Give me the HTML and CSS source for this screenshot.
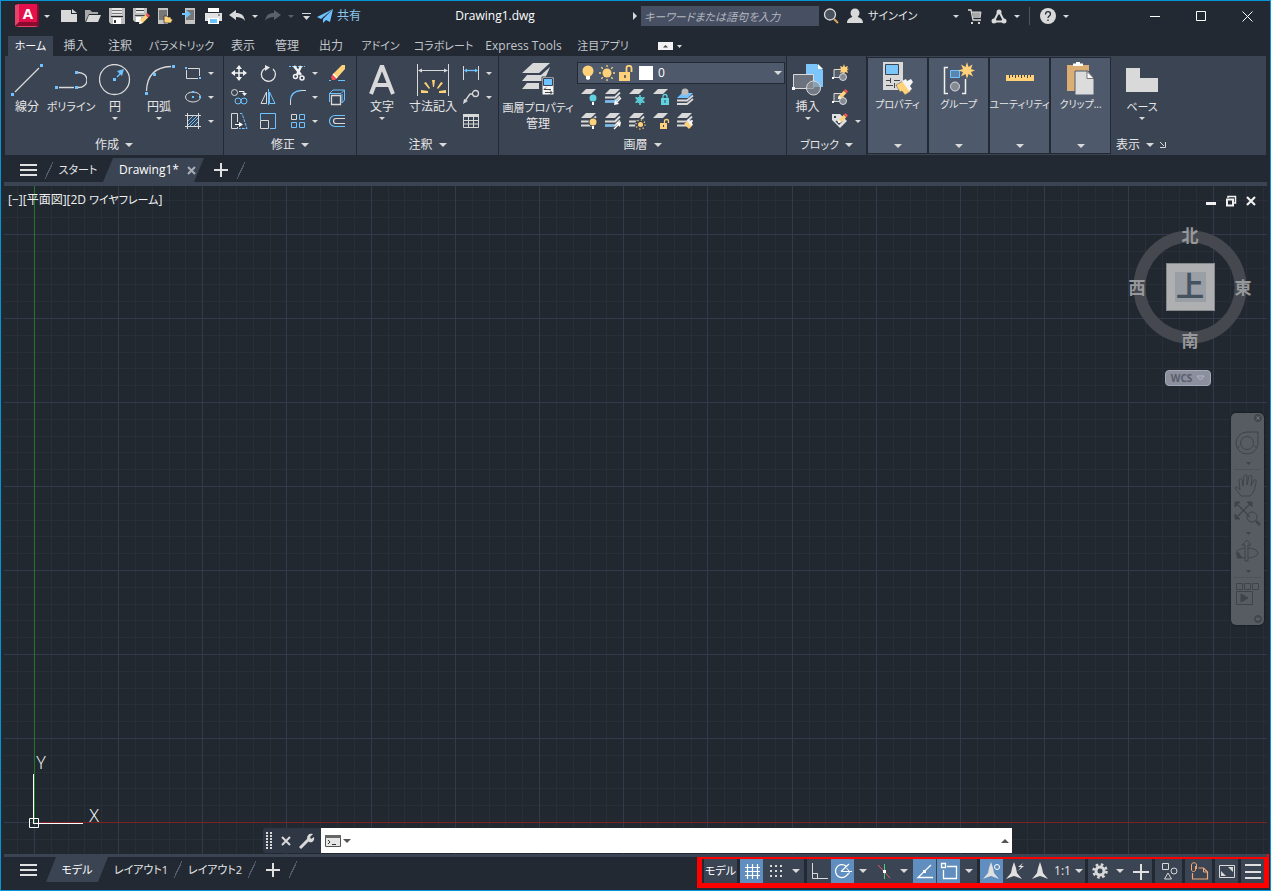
FILE: index.html
```html
<!DOCTYPE html>
<html lang="ja">
<head>
    <meta charset="UTF-8">
    <meta name="viewport" content="width=device-width, initial-scale=1.0">
    <title>Drawing1.dwg</title>
    <link rel="stylesheet" href="styles.css">
</head>
<body>
    <!-- Shared symbols -->
    <svg class="sprite" aria-hidden="true">
        <symbol id="plane" viewBox="0 0 18 18"><path d="M6 1h10l-5 5H1z" fill="#d9d9d9"/></symbol>
        <symbol id="stack" viewBox="0 0 18 18">
            <path d="M6 1h10l-5 5H1z" fill="#d9d9d9"/>
            <path d="M1 9.500h10l5-5M1 13.500h10l5-5" fill="none" stroke="#d9d9d9" stroke-width="2"/>
        </symbol>
        <symbol id="pencil" viewBox="0 0 12 12">
            <path d="M0 12l1-4 6-6 3 3-6 6z" fill="#ffd27a"/><path d="M7 2l2-2 3 3-2 2z" fill="#f2554f"/><path d="M0 12l1-4 3 3z" fill="#fff"/>
        </symbol>
        <symbol id="compass-a" viewBox="0 0 22 22"><path d="M11 2l2 6 1 5 5 6-5-2-3-1-3 1-5 2 5-6 1-5z" fill="#e0e0e0"/></symbol>
    </svg>

    <div class="app">
        <!-- Title bar -->
        <header class="titlebar">
            <div class="quick-access">
                <button class="logo-btn" aria-label="アプリケーション">
                    <svg width="25" height="24" viewBox="0 0 25 24"><path d="M0 1l4-1v18l20 5H4l-4-1z" fill="#e8446a"/><path d="M4 0h18v18H4z" fill="#e4104b"/><path d="M22 0l2 2v19l-2-3zM0 22l4-4h18l2 4z" fill="#8b0a2d"/><text x="13" y="15" class="logo-letter">A</text></svg>
                    <span class="caret"></span>
                </button>
                <button class="icon-btn" aria-label="新規"><svg width="16" height="14" viewBox="0 0 16 14"><path d="M0 1h10v4h6v8H0z" fill="#d9d9d9"/><path d="M11 0l5 4h-5z" fill="#d9d9d9"/></svg></button>
                <button class="icon-btn" aria-label="開く"><svg width="16" height="14" viewBox="0 0 16 14"><path d="M0 13V1h5l2 2h6v2H4z" fill="#a9a9a9"/><path d="M4 6h12l-3 7H1z" fill="#d9d9d9"/></svg></button>
                <button class="icon-btn" aria-label="上書き保存"><svg width="16" height="16" viewBox="0 0 16 16"><path d="M0 0h16v16H2l-2-2z" fill="#bdbdbd"/><path d="M3 0h10v7H3z" fill="#e6e6e6"/><path d="M3 2.500h10M3 5.500h10" stroke="#777"/><path d="M4 10h8v6H4z" fill="#fff"/><path d="M5 12h2v3H5z" fill="#333"/><path d="M2 8.500h12" stroke="#222"/></svg></button>
                <button class="icon-btn" aria-label="名前を付けて保存"><svg width="17" height="16" viewBox="0 0 17 16"><path d="M0 0h14v7l-6 7H2l-2-2z" fill="#bdbdbd"/><path d="M3 0h8v5H3z" fill="#e6e6e6"/><path d="M3 2.500h8M2 7.500h10" stroke="#444"/><path d="M3 9h5v5H3z" fill="#fff"/><use href="#pencil" x="6" y="5" width="11" height="11"/></svg></button>
                <button class="icon-btn" aria-label="Web から開く"><svg width="16" height="16" viewBox="0 0 16 16"><path d="M1 0h10v16H1z" fill="#c4c4c4"/><path d="M2 2h8v10H2z" fill="#777"/><path d="M7 15V8h3l1 1h3v2h2l-2 4z" fill="#ffd27a" stroke="#222933" stroke-width=".7"/></svg></button>
                <button class="icon-btn" aria-label="Web に保存"><svg width="16" height="16" viewBox="0 0 16 16"><path d="M4 0h10v16H4z" fill="#c4c4c4"/><path d="M5 2h8v10H5z" fill="#777"/><path d="M1 5h4V2l5 4-5 4V7H1z" fill="#6ec2ff"/></svg></button>
                <button class="icon-btn" aria-label="印刷"><svg width="17" height="16" viewBox="0 0 17 16"><path d="M3 0h11v4H3z" fill="#fff"/><path d="M0 5h17v8h-3v-3H3v3H0z" fill="#e2e2e2"/><path d="M3 10h11v6H3z" fill="#fff"/><path d="M5 11h7v4H5z" fill="#6ec2ff"/><path d="M13 7h2" stroke="#444"/></svg></button>
                <button class="icon-btn" aria-label="元に戻す"><svg width="16" height="12" viewBox="0 0 16 12"><path d="M7 0v3c5 0 8 2 9 8-2-3-5-4-9-4v3L0 5z" fill="#d9d9d9"/></svg></button>
                <button class="drop" aria-label="元に戻す一覧"><span class="caret"></span></button>
                <button class="icon-btn" aria-label="やり直し"><svg width="16" height="12" viewBox="0 0 16 12"><path d="M9 0v3C4 3 1 5 0 11c2-3 5-4 9-4v3l7-5z" fill="#5b616a"/></svg></button>
                <button class="drop" aria-label="やり直し一覧"><span class="caret dim"></span></button>
                <button class="drop custom" aria-label="カスタマイズ"><svg width="9" height="7" viewBox="0 0 9 7"><path d="M0 0h9v1H0zM1 3h7L4.500 7z" fill="#d9d9d9"/></svg></button>
                <button class="share-btn"><svg width="16" height="14" viewBox="0 0 16 14"><path d="M16 0L0 8l4 2z M16 0L6 10v4l3-3 4 2z" fill="#6ec2ff"/></svg>共有</button>
            </div>
            <h1>Drawing1.dwg</h1>
            <div class="title-tools">
                <button class="drop" aria-label="検索を折りたたむ"><svg width="5" height="8" viewBox="0 0 5 8"><path d="M0 0l4 4-4 4z" fill="#d9d9d9"/></svg></button>
                <input class="search" type="search" aria-label="キーワード検索" placeholder="キーワードまたは語句を入力">
                <button class="icon-btn" aria-label="検索"><svg width="16" height="16" viewBox="0 0 16 16"><circle cx="7" cy="6.500" r="5.500" fill="#49525c" stroke="#d9d9d9" stroke-width="1.300"/><path d="M11 11l4 4" stroke="#d5a662" stroke-width="2"/></svg></button>
                <button class="signin"><svg width="16" height="16" viewBox="0 0 16 16"><circle cx="8" cy="5" r="4.500" fill="#d9d9d9"/><path d="M0 15c0-4 3-5 5-6h6c2 1 5 2 5 6z" fill="#d9d9d9"/></svg><span class="kana">サインイン</span><span class="caret"></span></button>
                <button class="icon-btn" aria-label="ストア"><svg width="14" height="15" viewBox="0 0 14 15"><path d="M0 1h3l2 10h8" fill="none" stroke="#d9d9d9" stroke-width="1.300"/><path d="M4 3h9l-1 6H5z" fill="#a9a9a9"/><path d="M4 3h9l-1 6" fill="none" stroke="#d9d9d9"/><path d="M3 13h2v2H3zM10 13h2v2h-2z" fill="#d9d9d9"/></svg></button>
                <button class="icon-btn" aria-label="接続"><svg width="16" height="15" viewBox="0 0 16 15"><path d="M8 2L3 12M8 2l5 10M3 12.500h10" fill="none" stroke="#d9d9d9" stroke-width="2"/><circle cx="8" cy="3" r="2.500" fill="#d9d9d9"/><circle cx="3" cy="12" r="2.500" fill="#d9d9d9"/><circle cx="13" cy="12" r="2.500" fill="#d9d9d9"/></svg></button>
                <button class="drop" aria-label="接続一覧"><span class="caret"></span></button>
                <span class="divider"></span>
                <button class="icon-btn" aria-label="ヘルプ"><svg width="16" height="16" viewBox="0 0 16 16"><circle cx="8" cy="8" r="8" fill="#d9d9d9"/><path d="M5.500 6.500c0-4 5-3.500 5-.5 0 2-2.500 2-2.500 4M8 11.500v1.500" fill="none" stroke="#222933" stroke-width="1.300"/></svg></button>
                <button class="drop" aria-label="ヘルプ一覧"><span class="caret"></span></button>
            </div>
            <div class="window-buttons">
                <button aria-label="最小化"><svg width="11" height="11" viewBox="0 0 11 11"><path d="M0 5.500h10" stroke="#fff"/></svg></button>
                <button aria-label="最大化"><svg width="11" height="11" viewBox="0 0 11 11"><path d="M.5.5h9v9h-9z" fill="none" stroke="#fff"/></svg></button>
                <button aria-label="閉じる"><svg width="11" height="11" viewBox="0 0 11 11"><path d="M.5.5l10 10m0-10l-10 10" stroke="#fff"/></svg></button>
            </div>
        </header>

        <!-- Ribbon tabs -->
        <nav class="ribbon-tabs">
            <button class="active kana">ホーム</button>
            <button>挿入</button>
            <button>注釈</button>
            <button class="kana">パラメトリック</button>
            <button>表示</button>
            <button>管理</button>
            <button>出力</button>
            <button class="kana">アドイン</button>
            <button class="kana">コラボレート</button>
            <button>Express Tools</button>
            <button class="kana">注目アプリ</button>
            <button class="minimize" aria-label="リボンを最小化"><svg width="25" height="8" viewBox="0 0 25 8"><path d="M0 0h15v8H0z" fill="#f2f2f2"/><path d="M5 5.500h5L7.500 3z" fill="#444"/><path d="M19 3h5l-2.500 3z" fill="#d9d9d9"/></svg></button>
        </nav>

        <!-- Ribbon -->
        <div class="ribbon">
            <section class="panel draw">
                <div class="panel-body">
                    <button class="tool"><svg width="32" height="32" viewBox="0 0 32 32"><path d="M4 28L28 4" stroke="#d9d9d9" stroke-width="1.300"/><path d="M0 29h3v3H0zM29 0h3v3h-3z" fill="#6ec2ff"/></svg><span>線分</span></button>
                    <button class="tool"><svg width="32" height="32" viewBox="0 0 32 32"><path d="M4 23.500h15m4 0c12 0 12-15 0-15" fill="none" stroke="#d9d9d9" stroke-width="1.300"/><path d="M0 22h3v3H0zM20 22h3v3h-3zM20 7h3v3h-3z" fill="#6ec2ff"/></svg><span class="kana">ポリライン</span></button>
                    <button class="tool"><svg width="32" height="32" viewBox="0 0 32 32"><circle cx="15.500" cy="15.500" r="15" fill="none" stroke="#d9d9d9" stroke-width="1.300"/><path d="M18 13l4-4" stroke="#6ec2ff" stroke-width="1.300"/><path d="M14 14h3v3h-3zM18 7l7-2-2 7z" fill="#6ec2ff"/></svg><span>円</span><i class="caret"></i></button>
                    <button class="tool"><svg width="32" height="32" viewBox="0 0 32 32"><path d="M3.500 27C4 10 14 3 28 2.500" fill="none" stroke="#d9d9d9" stroke-width="1.300"/><path d="M2 28h3v3H2zM10 9h3v3h-3zM29 1h3v3h-3z" fill="#6ec2ff"/></svg><span>円弧</span><i class="caret"></i></button>
                    <div class="tool-grid">
                        <button aria-label="長方形"><svg width="18" height="18" viewBox="0 0 18 18"><path d="M4 4.500h11.500V12M14 14.500H2.500V6" fill="none" stroke="#d9d9d9"/><path d="M1 3h2v2H1zM15 13h2v2h-2z" fill="#6ec2ff"/></svg></button><button aria-label="長方形一覧"><i class="caret"></i></button>
                        <button aria-label="楕円"><svg width="18" height="18" viewBox="0 0 18 18"><ellipse cx="9" cy="9" rx="7.500" ry="5" fill="none" stroke="#d9d9d9"/><path d="M8 3h2v2H8zM8 8h2v2H8zM15 8h2v2h-2z" fill="#6ec2ff"/></svg></button><button aria-label="楕円一覧"><i class="caret"></i></button>
                        <button aria-label="ハッチング"><svg width="18" height="18" viewBox="0 0 18 18"><path d="M4 9l5-5M4 13l9-9M6 14l8-8M10 14l4-4" stroke="#6ec2ff"/><path d="M3.500 1v16M14.500 1v16M1 3.500h16M1 14.500h16" stroke="#d9d9d9"/></svg></button><button aria-label="ハッチング一覧"><i class="caret"></i></button>
                    </div>
                </div>
                <button class="panel-title">作成 <i class="caret big"></i></button>
            </section>

            <section class="panel modify">
                <div class="panel-body">
                    <div class="tool-grid">
                        <button aria-label="移動"><svg width="18" height="18" viewBox="0 0 18 18"><path d="M9 2v14M2 9h14" stroke="#f2f2f2" stroke-width="1.500"/><path d="M9 1l3 4H6zM9 17l3-4H6zM1 9l4-3v6zM17 9l-4-3v6z" fill="#f2f2f2"/></svg></button>
                        <button aria-label="回転"><svg width="18" height="18" viewBox="0 0 18 18"><path d="M14 5A7 7 0 1 1 6 4.200" fill="none" stroke="#e6e6e6" stroke-width="1.300"/><path d="M6 1l5 2.500L6 7z" fill="#e6e6e6"/></svg></button>
                        <button aria-label="トリム"><svg width="18" height="18" viewBox="0 0 18 18"><path d="M0 2.500h16" stroke="#6ec2ff" stroke-dasharray="2 1"/><path d="M5 2l7 9M12 2l-4 9" stroke="#f2f2f2" stroke-width="2.500"/><circle cx="6.500" cy="12.500" r="2" fill="none" stroke="#f2f2f2" stroke-width="1.500"/><circle cx="13" cy="14" r="2" fill="none" stroke="#f2f2f2" stroke-width="1.500"/></svg></button>
                        <button aria-label="トリム一覧"><i class="caret"></i></button>
                        <button aria-label="削除"><svg width="18" height="18" viewBox="0 0 18 18"><path d="M5 10L14 1h3v4l-8 9z" fill="#ffd27a"/><path d="M5 10l4 4-2 2H4l-1-3z" fill="#f2554f"/><path d="M5 10l4 4" stroke="#fff" stroke-width="1.500"/><path d="M10 16.500h7M1 16.500h2" stroke="#6ec2ff"/></svg></button>
                        <button aria-label="複写"><svg width="18" height="18" viewBox="0 0 18 18"><circle cx="4.500" cy="4.500" r="3" fill="none" stroke="#d9d9d9"/><path d="M9 3.500h5V6" fill="none" stroke="#f2f2f2"/><path d="M12 5h5l-2.500 3z" fill="#f2f2f2"/><circle cx="8" cy="13" r="3" fill="none" stroke="#6ec2ff"/><circle cx="14" cy="13" r="3" fill="none" stroke="#6ec2ff"/></svg></button>
                        <button aria-label="鏡像"><svg width="18" height="18" viewBox="0 0 18 18"><path d="M7.500 4v11.500H2z" fill="none" stroke="#d9d9d9"/><path d="M10.500 4v11.500H16z" fill="none" stroke="#6ec2ff"/><path d="M9.500 1v16" stroke="#6ec2ff"/></svg></button>
                        <button aria-label="フィレット"><svg width="18" height="18" viewBox="0 0 18 18"><path d="M1.500 17v-5M12 2.500h5" stroke="#d9d9d9"/><path d="M1.500 12C2 6 6 3 12 2.500" fill="none" stroke="#6ec2ff" stroke-width="1.300"/></svg></button>
                        <button aria-label="フィレット一覧"><i class="caret"></i></button>
                        <button aria-label="分解"><svg width="18" height="18" viewBox="0 0 18 18"><path d="M3.500 7.500h9v9h-9z" fill="none" stroke="#d9d9d9" stroke-width="1.300"/><path d="M1.500 14V5.500L5 2h11.500v10L14 15V6M1.500 5.500H13L16.500 2" fill="none" stroke="#6ec2ff"/></svg></button>
                        <button aria-label="ストレッチ"><svg width="18" height="18" viewBox="0 0 18 18"><path d="M7.500 10V1.500h-6v15h6V15" fill="none" stroke="#d9d9d9"/><path d="M10 1.500h2l5 15H9" fill="none" stroke="#6ec2ff" stroke-dasharray="3 1"/><path d="M5 12.500h5" stroke="#fff"/><path d="M9 10l4 2.500L9 15z" fill="#fff"/></svg></button>
                        <button aria-label="尺度変更"><svg width="18" height="18" viewBox="0 0 18 18"><path d="M1.500 8V1.500h15v15H11" fill="none" stroke="#6ec2ff"/><path d="M1.500 8.500h8v8h-8z" fill="none" stroke="#d9d9d9"/></svg></button>
                        <button aria-label="配列複写"><svg width="18" height="18" viewBox="0 0 18 18"><path d="M2.500 2.500h5v5h-5z" fill="none" stroke="#d9d9d9"/><path d="M10.500 2.500h5v5h-5zM2.500 10.500h5v5h-5zM10.500 10.500h5v5h-5z" fill="none" stroke="#6ec2ff"/></svg></button>
                        <button aria-label="配列複写一覧"><i class="caret"></i></button>
                        <button aria-label="オフセット"><svg width="18" height="18" viewBox="0 0 18 18"><path d="M17 3.500H7a5.500 5.500 0 0 0 0 11h10" fill="none" stroke="#6ec2ff" stroke-width="1.200"/><path d="M17 6.500H8a2.500 2.500 0 0 0 0 5h9" fill="none" stroke="#d9d9d9" stroke-width="1.200"/></svg></button>
                    </div>
                </div>
                <button class="panel-title">修正 <i class="caret big"></i></button>
            </section>

            <section class="panel annotate">
                <div class="panel-body">
                    <button class="tool"><svg width="32" height="32" viewBox="0 0 32 32"><path d="M5 30L15.500 3h1L27 30M9 21h14" fill="none" stroke="#d9d9d9" stroke-width="4"/></svg><span>文字</span><i class="caret"></i></button>
                    <button class="tool dimension"><svg width="32" height="32" viewBox="0 0 32 32"><path d="M.5 0v32M31.500 0v32M2 6.500h28" stroke="#d9d9d9"/><path d="M1 6.500l4-2v4zM31 6.500l-4-2v4z" fill="#d9d9d9"/><path d="M15 16h3l-1 7h-1zM7 19l2-1 4 6-1 1zM26 19l-2-1-4 6 1 1zM4 26l7 1v2H4zM29 26l-7 1v2h7z" fill="#ffd27a"/></svg><span>寸法記入</span></button>
                    <div class="tool-grid">
                        <button aria-label="長さ寸法"><svg width="18" height="18" viewBox="0 0 18 18"><path d="M1.500 2v14M16.500 2v14" stroke="#d9d9d9"/><path d="M3 6.500h12" stroke="#6ec2ff" stroke-width="1.300"/><path d="M2 6.500l3-2v4zM16 6.500l-3-2v4z" fill="#6ec2ff"/></svg></button><button aria-label="寸法一覧"><i class="caret"></i></button>
                        <button aria-label="引出線"><svg width="18" height="18" viewBox="0 0 18 18"><path d="M3 13l5-7h2" fill="none" stroke="#d9d9d9" stroke-width="1.300"/><path d="M1 16l1-5 4 2z" fill="#d9d9d9"/><circle cx="13.500" cy="5.500" r="3" fill="none" stroke="#d9d9d9" stroke-width="1.300"/></svg></button><button aria-label="引出線一覧"><i class="caret"></i></button>
                        <button aria-label="表"><svg width="18" height="18" viewBox="0 0 18 18"><path d="M1 2h16v3H1z" fill="#d9d9d9"/><path d="M1.500 2.500h15v13h-15zM1 8.500h16M1 12h16M6.500 5v11M11.500 5v11" fill="none" stroke="#d9d9d9"/></svg></button>
                    </div>
                </div>
                <button class="panel-title">注釈 <i class="caret big"></i></button>
            </section>

            <section class="panel layers">
                <div class="panel-body">
                    <button class="tool layer-props"><svg width="34" height="34" viewBox="0 0 34 34"><path d="M12 0h17L18 10H1zM6 12h14l9-8-6 14H1zM6 20h12v6H1z" fill="#d9d9d9"/><path d="M21 14h12v18H21z" fill="#f5f5f5" stroke="#3b4453"/><path d="M22.500 15.500h9v7h-9z" fill="#6ec2ff" stroke="#3b4453"/><path d="M23 26.500h7m-5-2l-2 2M24 29.500h7m-2-2l2 2-2 2" fill="none" stroke="#444"/></svg><span class="kana">画層プロパティ</span><span>管理</span></button>
                    <div class="layer-column">
                        <div class="layer-box">
                            <svg width="16" height="18" viewBox="0 0 16 18"><circle cx="8" cy="7" r="5.500" fill="#ffd27a"/><path d="M6 12h4v3l-2 1-2-1z" fill="#fff"/></svg>
                            <svg width="16" height="16" viewBox="0 0 16 16"><circle cx="8" cy="8" r="4.500" fill="#ffd27a"/><path d="M8 0v2M8 14v2M0 8h2M14 8h2M2.300 2.300l1.500 1.500M12.200 12.200l1.500 1.500M2.300 13.700l1.500-1.500M12.200 3.800l1.500-1.500" stroke="#ffd27a" stroke-width="1.300"/></svg>
                            <svg width="16" height="16" viewBox="0 0 16 16"><path d="M1 7h11v9H1z" fill="#ffd27a"/><path d="M8.500 7V3c0-3 5-3 5 0v4" fill="none" stroke="#ffd27a" stroke-width="1.800"/><path d="M7 10v3" stroke="#3b4453" stroke-width="1.500"/></svg>
                            <span class="swatch"></span>
                            <select aria-label="画層"><option>0</option></select>
                            <i class="caret big"></i>
                        </div>
                        <div class="layer-tools">
                            <button aria-label="非表示"><svg width="18" height="18" viewBox="0 0 18 18"><use href="#plane" width="18" height="18"/><circle cx="13" cy="10" r="3.500" fill="#5fd3e0"/><path d="M12 14h2v3h-2z" fill="#fff"/></svg></button>
                            <button aria-label="選択表示"><svg width="18" height="18" viewBox="0 0 18 18"><use href="#stack" width="18" height="18"/><path d="M1 13.500h9l2-2" fill="none" stroke="#6ec2ff" stroke-width="2"/><path d="M17 10l-5 5" stroke="#fff" stroke-width="1.300"/><path d="M10 17l1-5 4 4z" fill="#fff"/></svg></button>
                            <button aria-label="フリーズ"><svg width="18" height="18" viewBox="0 0 18 18"><use href="#plane" width="18" height="18"/><path d="M12 7v10M7.500 9.500l9 5M7.500 14.500l9-5" stroke="#5fd3e0" stroke-width="1.500"/><circle cx="12" cy="12" r="3" fill="none" stroke="#5fd3e0"/></svg></button>
                            <button aria-label="ロック"><svg width="18" height="18" viewBox="0 0 18 18"><use href="#plane" width="18" height="18"/><path d="M9 10h8v7H9z" fill="#5fd3e0"/><path d="M11 10V8c0-2 4-2 4 0v2" fill="none" stroke="#5fd3e0" stroke-width="1.300"/><path d="M13 12v3" stroke="#3b4453"/></svg></button>
                            <button aria-label="現在層に設定"><svg width="18" height="18" viewBox="0 0 18 18"><path d="M1 12.500h10l6-5M1 16h10l6-5" fill="none" stroke="#d9d9d9" stroke-width="1.800"/><path d="M6 5h11l-5 5H1z" fill="#6ec2ff"/><circle cx="9" cy="4" r="3.500" fill="#bdbdbd"/></svg></button>
                            <button aria-label="全表示"><svg width="18" height="18" viewBox="0 0 18 18"><use href="#stack" width="18" height="18"/><circle cx="13" cy="10" r="4.500" fill="#3b4453"/><circle cx="13" cy="10" r="3.500" fill="#ffd27a"/><path d="M12 14h2v3h-2z" fill="#fff"/></svg></button>
                            <button aria-label="選択表示解除"><svg width="18" height="18" viewBox="0 0 18 18"><use href="#stack" width="18" height="18"/><path d="M1 13.500h9" stroke="#6ec2ff" stroke-width="2"/><path d="M10 17l5-5" stroke="#fff" stroke-width="1.300"/><path d="M17 10l-1 5-4-4z" fill="#fff"/></svg></button>
                            <button aria-label="全フリーズ解除"><svg width="18" height="18" viewBox="0 0 18 18"><use href="#stack" width="18" height="18"/><circle cx="12.500" cy="12.500" r="5.500" fill="#3b4453"/><circle cx="12.500" cy="12.500" r="2.500" fill="#ffd27a"/><circle cx="12.500" cy="12.500" r="4.500" fill="none" stroke="#ffd27a" stroke-width="1.300" stroke-dasharray="1.200 2.300"/></svg></button>
                            <button aria-label="ロック解除"><svg width="18" height="18" viewBox="0 0 18 18"><use href="#plane" width="18" height="18"/><path d="M8 11h7v6H8z" fill="#ffd27a"/><path d="M12.500 11V9c0-2 4-2 4 0v2" fill="none" stroke="#ffd27a" stroke-width="1.300"/><path d="M11.500 13v2" stroke="#3b4453"/></svg></button>
                            <button aria-label="画層コピー"><svg width="18" height="18" viewBox="0 0 18 18"><use href="#stack" width="18" height="18"/><path d="M8 12l4-3 4 5-3 3z" fill="#ffd27a"/><path d="M11 8l2-1 1 2 3-1-1 3 1 2-2 1z" fill="#f5f5f5"/></svg></button>
                        </div>
                    </div>
                </div>
                <button class="panel-title">画層 <i class="caret big"></i></button>
            </section>

            <section class="panel block">
                <div class="panel-body">
                    <button class="tool"><svg width="32" height="32" viewBox="0 0 32 32"><path d="M14 0h11l6 6v17H14z" fill="#7cc6fb"/><path d="M26 0l5 5h-5z" fill="#fff"/><path d="M1.500 10.500h20v14h-20z" fill="#6b727d" stroke="#d9d9d9"/><circle cx="21.500" cy="24" r="7" fill="#8c929a" fill-opacity=".7" stroke="#d9d9d9"/><path d="M0 23h3v3H0z" fill="#f5f5f5"/></svg><span>挿入</span><i class="caret"></i></button>
                    <div class="tool-grid">
                        <button aria-label="ブロック作成"><svg width="18" height="18" viewBox="0 0 18 18"><path d="M3 5.500h9v8H3z" fill="#555d69" stroke="#d9d9d9"/><circle cx="12" cy="13" r="3.500" fill="#858b94" stroke="#d9d9d9"/><path d="M1 13h2v2H1z" fill="#fff"/><path d="M13 0l1 3 3-1-1 2.500 2 .5-2 1 1 3-3-1-1 2-1-2-3 1 1-3-2-1 2-.5L9 2l3 1z" fill="#ffd27a"/></svg></button><span></span>
                        <button aria-label="ブロック編集"><svg width="18" height="18" viewBox="0 0 18 18"><path d="M3 5.500h9v8H3z" fill="#555d69" stroke="#d9d9d9"/><circle cx="12" cy="13" r="3.500" fill="#858b94" stroke="#d9d9d9"/><path d="M1 13h2v2H1z" fill="#fff"/><use href="#pencil" x="7" y="1" width="10" height="10"/></svg></button><span></span>
                        <button aria-label="属性編集"><svg width="18" height="18" viewBox="0 0 18 18"><path d="M1 2h8l7 7-7 7-8-8z" fill="#e0e0e0"/><path d="M3 4h2v2H3z" fill="#3b4453"/><path d="M5 9l3 3 3-3" fill="none" stroke="#3b4453" stroke-width="1.500"/><use href="#pencil" x="7" y="1" width="10" height="10"/></svg></button><button aria-label="属性一覧"><i class="caret"></i></button>
                    </div>
                </div>
                <button class="panel-title kana">ブロック <i class="caret big"></i></button>
            </section>

            <button class="collapsed"><svg width="32" height="34" viewBox="0 0 32 34"><path d="M1 0h20v28H1z" fill="#d9d9d9"/><path d="M3.500 2.500h13v10h-13z" fill="#7cc6fb" stroke="#3b4453"/><path d="M4 18.500h5m3 0h6M4 23.500h7m3 0h4M8.500 16v5M12.500 21v5" stroke="#444"/><path d="M14 23l7-4 8 10-6 4-3-4-2 1z" fill="#ffd27a" stroke="#4e5a6c" stroke-width=".5"/><path d="M20 19l4-2 1 2 4-2 2 3-3 4 2 3-3 2z" fill="#f5f5f5"/></svg><span>プロパティ</span><i class="caret big"></i></button>
            <button class="collapsed"><svg width="32" height="34" viewBox="0 0 32 34"><path d="M5 5.500H1.500v26H5M19 31.500h3.500V17" fill="none" stroke="#f0f0f0" stroke-width="1.500"/><path d="M7.500 8.500h9v7h-9z" fill="#5a86ad" stroke="#6ec2ff"/><circle cx="12" cy="24.500" r="4.500" fill="#858b94" stroke="#d9d9d9"/><path d="M24 0l1.500 5 4-2.500L28 7l4 1.500-4 1.500 2 4.500-4.500-2.500L24 17l-1.500-5-4.500 2.500 2-4.500-5-1.500L20 7l-2-4.500L22.500 5z" fill="#ffd27a"/></svg><span>グループ</span><i class="caret big"></i></button>
            <button class="collapsed"><svg width="32" height="34" viewBox="0 0 32 34"><path d="M2 13h28v6H2z" fill="#ffd27a"/><path d="M5.500 13v3M8.500 13v2M11.500 13v3M14.500 13v2M17.500 13v3M20.500 13v2M23.500 13v3M26.500 13v2" stroke="#3b4453"/></svg><span>ユーティリティ</span><i class="caret big"></i></button>
            <button class="collapsed"><svg width="32" height="34" viewBox="0 0 32 34"><path d="M2 3h22v26H2z" fill="#dcae73"/><path d="M8 4V1.500h3V0h4v1.500h3V4z" fill="#fff"/><path d="M10 9h13l6 7v17H10z" fill="#dcdcdc" stroke="#4e5a6c"/><path d="M22 9.500l7 7h-7z" fill="#fff" stroke="#444" stroke-width=".7"/></svg><span>クリップ...</span><i class="caret big"></i></button>

            <section class="panel view">
                <div class="panel-body">
                    <button class="tool"><svg width="32" height="32" viewBox="0 0 32 32"><path d="M0 4h14v10h18v14H0z" fill="#d9d9d9"/></svg><span class="kana">ベース</span><i class="caret"></i></button>
                </div>
                <button class="panel-title">表示 <i class="caret big"></i><svg width="6" height="6" viewBox="0 0 6 6"><path d="M0 0l4 4M5.500 0v5.500H0" fill="none" stroke="#d9d9d9"/></svg></button>
            </section>
        </div>

        <!-- File tabs -->
        <nav class="file-tabs">
            <button class="menu-btn" aria-label="図面メニュー"><svg width="17" height="12" viewBox="0 0 17 12"><path d="M0 1h17M0 6h17M0 11h17" stroke="#e0e0e0" stroke-width="2"/></svg></button>
            <span class="slash"></span>
            <button class="file-tab kana">スタート</button>
            <button class="file-tab active">Drawing1* <svg width="9" height="9" viewBox="0 0 9 9"><path d="M1 1l7 7m0-7L1 8" stroke="#a9afb8" stroke-width="2"/></svg></button>
            <button class="add-btn" aria-label="新規図面"><svg width="14" height="14" viewBox="0 0 14 14"><path d="M7 0v14M0 7h14" stroke="#e0e0e0" stroke-width="2"/></svg></button>
            <span class="slash"></span>
        </nav>

        <!-- Drawing area -->
        <main class="drawing">
            <svg class="grid" aria-hidden="true">
                <defs>
                    <pattern id="gridPattern" x="30" y="2968" width="421" height="84" patternUnits="userSpaceOnUse">
                        <path d="M17.500 0v84M34.500 0v84M50.500 0v84M67.500 0v84M101.500 0v84M118.500 0v84M135.500 0v84M151.500 0v84M185.500 0v84M202.500 0v84M219.500 0v84M236.500 0v84M269.500 0v84M286.500 0v84M303.500 0v84M320.500 0v84M354.500 0v84M370.500 0v84M387.500 0v84M404.500 0v84M0 17.500h421M0 34.500h421M0 50.500h421M0 67.500h421" stroke="#292e38"/>
                        <path d="M.5 0v84M84.500 0v84M168.500 0v84M252.500 0v84M337.500 0v84M0 .5h421" stroke="#34394e"/>
                    </pattern>
                </defs>
                <rect width="100%" height="3000" fill="url(#gridPattern)"/>
            </svg>
            <div class="axis-x"></div>
            <div class="axis-y"></div>

            <p class="view-label">[−][平面図][2D <span class="kana">ワイヤフレーム</span>]</p>

            <div class="view-buttons">
                <button aria-label="ビューポート最小化"><svg width="12" height="12" viewBox="0 0 12 12"><path d="M1 7h10v3H1z" fill="#f0f0f0"/></svg></button>
                <button aria-label="ビューポート復元"><svg width="12" height="12" viewBox="0 0 12 12"><path d="M3 3V1.500h7.500V8H9" fill="none" stroke="#f0f0f0" stroke-width="1.500"/><path d="M2 4.500h6v6H2z" fill="none" stroke="#f0f0f0" stroke-width="2"/></svg></button>
                <button aria-label="ビューポートを閉じる"><svg width="12" height="12" viewBox="0 0 12 12"><path d="M2 2l8 8m0-8l-8 8" stroke="#f0f0f0" stroke-width="2.200"/></svg></button>
            </div>

            <!-- View cube -->
            <svg class="view-cube" width="128" height="132" viewBox="0 0 128 132">
                <circle cx="64" cy="64" r="50.500" fill="none" stroke="#45494f" stroke-width="12"/>
                <rect x="40.500" y="40.500" width="48" height="47" fill="#adafb1" stroke="#85898b"/>
                <rect x="49" y="49" width="31" height="30" fill="#9a9fa6"/>
                <text x="64" y="74" class="cube-face">上</text>
                <text x="64" y="19" class="compass">北</text>
                <text x="11" y="71" class="compass">西</text>
                <text x="117" y="71" class="compass">東</text>
                <text x="64" y="124" class="compass">南</text>
            </svg>
            <button class="wcs">WCS <svg width="9" height="6" viewBox="0 0 9 6"><path d="M1 1h7L4.500 5z" fill="none" stroke="#b5b7c2"/></svg></button>

            <!-- Navigation bar -->
            <div class="nav-bar">
                <svg width="33" height="212" viewBox="0 0 33 212" fill="none" stroke="#3f444b">
                    <circle cx="27" cy="5" r="3.500" fill="#474c53"/><path d="M25.500 3.500l3 3m0-3l-3 3" stroke="#70747a"/>
                    <path d="M16 19h11v11a11 11 0 1 1-11-11z"/><circle cx="16" cy="30" r="6.500"/><path d="M9 33l-3 2M23 33l3 2"/>
                    <path d="M15 49h5l-2.500 3zM15 119h5l-2.500 3zM15 157h5l-2.500 3z" fill="#3f444b" stroke="none"/>
                    <path d="M3 56.500h27M3 164.500h27" stroke="#4d5259"/>
                    <path d="M10 83c-3-4-5-7-6-8 1-2 3-1 5 2l-1-10c1-2 3-1 3 0l1 6 1-10c1-2 3-1 3 0v9l2-9c1-1 3-1 3 1l-1 9 3-6c1-1 3 0 2 2-1 6-2 11-6 14z"/>
                    <path d="M6 91l13 13M19 91L6 104" stroke-width="1.300"/><path d="M4 89h5l-5 5zM21 89v5l-5-5zM4 106h5l-5-5z" fill="#3f444b"/><circle cx="21" cy="104" r="5"/><path d="M25 108l4 4" stroke-width="2.500"/>
                    <ellipse cx="16" cy="140" rx="11" ry="5"/><path d="M14 148v-16h-3l5-5 4 5h-3v16z" fill="#575b62"/><path d="M7 139l4 6H6z" fill="#3f444b"/>
                    <path d="M5.500 170.500h6v6h-6zM13.500 170.500h6v6h-6zM21.500 170.500h6v6h-6zM5.500 178.500h16v13h-16z"/><path d="M10 181v8l7-4z" fill="#3f444b"/>
                    <circle cx="27" cy="206" r="3.500" fill="#474c53"/><path d="M25 206h4" stroke="#70747a"/>
                </svg>
            </div>

            <!-- UCS icon -->
            <svg class="ucs" width="80" height="84" viewBox="0 0 80 84">
                <path d="M5.500 29v50M5 78.500h50" stroke="#fff"/><path d="M1.500 73.500h9v9h-9z" fill="none" stroke="#fff"/>
                <text x="13" y="24" class="axis-name">Y</text><text x="66" y="77" class="axis-name">X</text>
            </svg>

            <!-- Command line -->
            <div class="command">
                <div class="command-tools">
                    <svg width="6" height="18" viewBox="0 0 6 18"><path d="M1 0v18M5 0v18" stroke="#d9d9d9" stroke-width="2" stroke-dasharray="2 1"/></svg>
                    <button aria-label="閉じる"><svg width="10" height="10" viewBox="0 0 10 10"><path d="M1 1l8 8m0-8L1 9" stroke="#d9d9d9" stroke-width="2"/></svg></button>
                    <button aria-label="カスタマイズ"><svg width="16" height="16" viewBox="0 0 16 16"><path d="M1 15l9-9" stroke="#d9d9d9" stroke-width="3"/><path d="M8 6c0-4 2-6 6-5l-3 3 1 2 3-2c1 4-2 6-5 5z" fill="#d9d9d9"/></svg></button>
                </div>
                <div class="command-line">
                    <button aria-label="最近使ったコマンド"><svg width="26" height="12" viewBox="0 0 26 12"><path d="M.5.5h15v11H.5z" fill="#e6e6e6" stroke="#555"/><path d="M0 0h16v3H0z" fill="#666"/><path d="M3 5l2 2-2 2M7 9.500h4" fill="none" stroke="#333"/><path d="M18 4h8l-4 4z" fill="#555"/></svg></button>
                    <input type="text" aria-label="コマンド">
                    <button aria-label="履歴"><svg width="8" height="4" viewBox="0 0 8 4"><path d="M0 4h8L4 0z" fill="#555"/></svg></button>
                </div>
            </div>
        </main>

        <!-- Status bar -->
        <footer class="statusbar">
            <div class="layout-tabs">
                <button class="menu-btn" aria-label="レイアウトメニュー"><svg width="17" height="12" viewBox="0 0 17 12"><path d="M0 1h17M0 6h17M0 11h17" stroke="#e0e0e0" stroke-width="2"/></svg></button>
                <button class="layout-tab active kana">モデル</button>
                <button class="layout-tab kana">レイアウト1</button>
                <span class="slash"></span>
                <button class="layout-tab kana">レイアウト2</button>
                <span class="slash"></span>
                <button class="add-btn" aria-label="新規レイアウト"><svg width="14" height="14" viewBox="0 0 14 14"><path d="M7 0v14M0 7h14" stroke="#e0e0e0" stroke-width="2"/></svg></button>
                <span class="slash"></span>
            </div>
            <div class="status-tools">
                <button class="model kana">モデル</button>
                <div class="group">
                    <button class="on" aria-label="グリッド"><svg width="22" height="22" viewBox="0 0 22 22"><path d="M6.500 4v15M11.500 4v15M16.500 4v15M4 7.500h15M4 11.500h15M4 15.500h15" stroke="#fff" stroke-width="1.200"/></svg></button>
                    <button aria-label="スナップ"><svg width="22" height="22" viewBox="0 0 22 22"><path d="M5 5h2v2H5zM10 5h2v2h-2zM15 5h2v2h-2zM5 10h2v2H5zM10 10h2v2h-2zM15 10h2v2h-2zM5 15h2v2H5zM10 15h2v2h-2zM15 15h2v2h-2z" fill="#d9d9d9"/></svg></button>
                    <button class="more" aria-label="スナップ設定"><i class="caret big"></i></button>
                </div>
                <div class="group">
                    <button aria-label="直交モード"><svg width="22" height="22" viewBox="0 0 22 22"><path d="M4.500 3v15.500H20M4.500 13.500h5v5" fill="none" stroke="#d9d9d9"/></svg></button>
                    <button class="on" aria-label="極トラッキング"><svg width="22" height="22" viewBox="0 0 22 22"><path d="M14 6A6.500 6.500 0 1 0 16 13.500M9 11.500h11M9 11.500L17 4" fill="none" stroke="#fff" stroke-width="1.200"/><path d="M14.500 8l3 3.500-1 3" fill="none" stroke="#fff"/></svg></button>
                    <button class="more" aria-label="極トラッキング設定"><i class="caret big"></i></button>
                    <button aria-label="アイソメ"><svg width="22" height="22" viewBox="0 0 22 22"><path d="M5 5l12 13" stroke="#d9606a"/><path d="M11.500 4v15" stroke="#55c97f"/><path d="M10 10h3v3h-3z" fill="#fff"/></svg></button>
                    <button class="more" aria-label="アイソメ設定"><i class="caret big"></i></button>
                    <button class="on" aria-label="オブジェクトスナップトラッキング"><svg width="22" height="22" viewBox="0 0 22 22"><path d="M17 5L4 17.500h15" fill="none" stroke="#fff" stroke-width="1.300"/><path d="M9 10h3v3H9z" fill="#fff"/></svg></button>
                    <button class="on" aria-label="オブジェクトスナップ"><svg width="22" height="22" viewBox="0 0 22 22"><path d="M9 6.500h9.500v12h-13V10" fill="none" stroke="#fff" stroke-width="1.300"/><path d="M3.500 3.500h4v4h-4z" fill="none" stroke="#fff" stroke-width="1.300"/></svg></button>
                    <button class="more" aria-label="オブジェクトスナップ設定"><i class="caret big"></i></button>
                </div>
                <div class="group">
                    <button class="on" aria-label="注釈の表示"><svg width="22" height="22" viewBox="0 0 22 22"><use href="#compass-a" x="-1" width="22" height="22"/><circle cx="16" cy="7" r="2.500" fill="#5f8ebf" stroke="#fff"/></svg></button>
                    <button aria-label="自動尺度"><svg width="22" height="22" viewBox="0 0 22 22"><use href="#compass-a" x="-2" width="22" height="22"/><path d="M18 3l-5 4h3l-3 4 6-5h-3z" fill="#e0e0e0"/></svg></button>
                    <button aria-label="注釈尺度"><svg width="22" height="22" viewBox="0 0 22 22"><use href="#compass-a" width="22" height="22"/></svg></button>
                    <button class="scale">1:1 <i class="caret big"></i></button>
                </div>
                <div class="group">
                    <button aria-label="ワークスペース"><svg width="22" height="22" viewBox="0 0 22 22"><circle cx="11" cy="11" r="4" fill="none" stroke="#d9d9d9" stroke-width="3"/><circle cx="11" cy="11" r="6.500" fill="none" stroke="#d9d9d9" stroke-width="2.500" stroke-dasharray="2.600 2.500"/></svg></button>
                    <button class="more" aria-label="ワークスペース設定"><i class="caret big"></i></button>
                    <button aria-label="注釈モニター"><svg width="22" height="22" viewBox="0 0 22 22"><path d="M11 4v16M3 12h16" stroke="#e0e0e0" stroke-width="2"/></svg></button>
                </div>
                <div class="group wide">
                    <button aria-label="選択表示"><svg width="22" height="22" viewBox="0 0 22 22" fill="none" stroke="#d9d9d9"><path d="M4.500 3.500h6v6h-6zM10 13l3.500 6h-7z"/><circle cx="16" cy="11" r="3"/></svg></button>
                </div>
                <div class="group wide">
                    <button aria-label="信頼できる場所"><svg width="22" height="22" viewBox="0 0 22 22" fill="none" stroke="#f0a878"><path d="M4.500 13v6h15v-7l-4-4h-5" stroke-width="1.200"/><path d="M15.500 8v4h4M7.500 6v4c0 2-4 2-4 0V5c0-3 5-3 5 0v4"/></svg></button>
                </div>
                <div class="group">
                    <button aria-label="フルスクリーン"><svg width="22" height="22" viewBox="0 0 22 22"><path d="M3.500 5.500h15v12h-15z" fill="none" stroke="#d9d9d9"/><path d="M12 7h5v5zM5 11v5h5z" fill="#d9d9d9"/></svg></button>
                </div>
                <div class="group">
                    <button aria-label="カスタマイズ"><svg width="22" height="22" viewBox="0 0 22 22"><path d="M3 5h16M3 12h16M3 18h16" stroke="#e0e0e0" stroke-width="2"/></svg></button>
                </div>
            </div>
        </footer>
    </div>
</body>
</html>
```
FILE: styles.css
```css
* {
    margin: 0;
    padding: 0;
    box-sizing: border-box;
}

body {
    background: #222933;
    color: #e6e6e6;
    font-family: "Open Sans", "Noto Sans CJK JP", sans-serif;
    font-size: 12px;
    line-height: 16px;
    font-feature-settings: "palt";
}

button {
    display: flex;
    align-items: center;
    justify-content: center;
    background: none;
    border: none;
    color: inherit;
    font: inherit;
    font-feature-settings: inherit;
    white-space: nowrap;
    cursor: pointer;
}

svg {
    display: block;
    flex: none;
}

.sprite {
    position: absolute;
    width: 0;
    height: 0;
}

.kana {
    font-size: 11px;
}

.app {
    display: flex;
    flex-direction: column;
    height: 100vh;
    padding: 0 3px;
    border: 1px solid #0696d7;
}

.caret {
    flex: none;
    border: 3px solid transparent;
    border-top-color: #d9d9d9;
    border-bottom: none;
}

.caret.big {
    border-width: 4px;
    border-bottom: none;
}

.caret.dim {
    border-top-color: #5b616a;
}

/* Title bar */
.titlebar {
    display: flex;
    align-items: center;
    height: 30px;
    margin-right: -3px;
}

.titlebar h1 {
    flex: 1;
    font-size: 12px;
    font-weight: normal;
    color: #fff;
    text-align: center;
}

.quick-access,
.title-tools,
.window-buttons {
    display: flex;
    align-items: center;
}

.logo-btn {
    gap: 4px;
    width: 53px;
    padding-left: 3px;
}

.logo-letter {
    fill: #fff;
    font-size: 15px;
    font-weight: bold;
    text-anchor: middle;
}

.icon-btn {
    width: 24px;
    height: 24px;
}

.drop {
    width: 12px;
    height: 24px;
}

.drop.custom {
    width: 18px;
}

.share-btn {
    gap: 4px;
    margin-left: 2px;
    color: #8cc8ee;
}

.search {
    width: 178px;
    height: 20px;
    padding: 0 3px;
    background: #474f62;
    border: none;
    color: #fff;
    font: italic 11px/16px "Open Sans", "Noto Sans CJK JP", sans-serif;
    font-feature-settings: "palt";
}

.search::placeholder {
    color: #b4b8c0;
}

.signin {
    width: 120px;
    height: 24px;
    padding: 0 4px;
    gap: 5px;
}

.signin .caret {
    margin-left: auto;
}

.divider {
    width: 1px;
    height: 18px;
    margin: 0 6px;
    background: #4b5563;
}

.window-buttons {
    margin-left: 60px;
}

.window-buttons button {
    width: 46px;
    height: 30px;
}

/* Ribbon tabs */
.ribbon-tabs {
    display: grid;
    grid-template-columns: 45px 45px 44px 79px 44px 44px 44px 55px 71px 89px 70px 64px;
    height: 20px;
    margin: 5px 4px 0;
    color: #c3c7cc;
}

.ribbon-tabs .active {
    background: #3b4453;
    color: #fff;
}

/* Ribbon */
.ribbon {
    display: flex;
    height: 99px;
    margin: 0 1px;
    background: #3b4453;
}

.panel {
    display: flex;
    flex: none;
    flex-direction: column;
    border-right: 1px solid #222933;
}

.panel-body {
    display: flex;
    height: 77px;
    padding-top: 5px;
}

.panel-title {
    gap: 6px;
    height: 22px;
    padding-top: 2px;
}

.tool {
    flex-direction: column;
    justify-content: flex-start;
    width: 44px;
    padding-top: 3px;
}

.tool span {
    margin-top: 3px;
}

.tool span + span {
    margin-top: 0;
}

.tool .caret {
    margin-top: 2px;
}

.tool-grid {
    display: grid;
    grid-template-columns: 24px 12px;
    grid-auto-rows: 24px;
}

.draw {
    width: 219px;
}

.modify {
    width: 133px;
}

.modify .tool-grid {
    grid-template-columns: 29px 30px 29px 6px 37px;
}

.annotate {
    width: 142px;
}

.annotate .tool {
    width: 50px;
}

.annotate .tool.dimension {
    width: 52px;
}

.layers {
    width: 288px;
}

.layer-props {
    width: 78px;
    padding-top: 2px;
}

.layer-box {
    display: flex;
    align-items: center;
    gap: 3px;
    width: 208px;
    height: 22px;
    margin: 1px 0;
    padding: 0 2px;
    background: #4e5a6c;
    border: 1px solid #222933;
}

.swatch {
    width: 14px;
    height: 14px;
    margin: 0 2px;
    background: #fff;
}

.layer-box select {
    flex: 1;
    appearance: none;
    background: none;
    border: none;
    color: #fff;
    font: inherit;
}

.layer-tools {
    display: grid;
    grid-template-columns: repeat(5, 24px);
    grid-auto-rows: 24px;
}

.block {
    width: 80px;
}

.block .tool {
    width: 41px;
}

.collapsed {
    flex: none;
    flex-direction: column;
    justify-content: flex-start;
    width: 61px;
    margin: 1px 0;
    padding: 4px 0 5px;
    background: #4e5a6c;
    border: 1px solid #222933;
    font-size: 10px;
}

.collapsed .caret {
    margin-top: auto;
}

.panel.view {
    flex: 1;
    border: none;
}

.view .tool {
    width: 62px;
}

.view .panel-title {
    justify-content: flex-start;
    padding-left: 5px;
}

/* File tabs */
.file-tabs {
    display: flex;
    align-items: stretch;
    height: 27px;
    padding-top: 3px;
}

.menu-btn {
    width: 48px;
}

.slash {
    align-self: center;
    width: 8px;
    height: 17px;
    background: linear-gradient(to bottom right, transparent 46%, #535d6c 46%, #535d6c 54%, transparent 54%);
}

.file-tab:not(.active) {
    width: 50px;
}

.file-tabs .slash:nth-child(2) {
    margin-left: -7px;
}

.file-tab.active {
    gap: 8px;
    width: 101px;
    padding-left: 8px;
    background: #3b4453;
    clip-path: polygon(10px 0, 100% 0, 91px 100%, 0 100%);
    color: #fff;
}

.add-btn {
    width: 33px;
}

/* Drawing area */
.drawing {
    position: relative;
    flex: 1;
    overflow: hidden;
    background: #212830;
    border-top: 4px solid #3b4453;
    border-bottom: 3px solid #3b4453;
}

.grid {
    position: absolute;
    bottom: 0;
    left: 0;
    width: 100%;
    height: 3000px;
}

.axis-x {
    position: absolute;
    right: 0;
    bottom: 31px;
    left: 35px;
    height: 1px;
    background: #7a2226;
}

.axis-y {
    position: absolute;
    top: 0;
    bottom: 31px;
    left: 30px;
    width: 1px;
    background: #1e7a22;
}

.view-label {
    position: absolute;
    top: 6px;
    left: 4px;
    color: #f0f0f0;
}

.view-buttons {
    position: absolute;
    top: 9px;
    right: 10px;
    display: flex;
    gap: 8px;
}

.view-cube {
    position: absolute;
    top: 37px;
    right: 13px;
    overflow: visible;
}

.compass {
    fill: #96989b;
    font-size: 17px;
    font-weight: bold;
    text-anchor: middle;
}

.cube-face {
    fill: #45525f;
    font-size: 28px;
    font-weight: bold;
    text-anchor: middle;
}

.wcs {
    position: absolute;
    top: 184px;
    right: 56px;
    gap: 4px;
    width: 46px;
    height: 16px;
    background: #8c8f9e;
    border: 1px solid #a5a8b5;
    border-radius: 4px;
    color: #5a5d6b;
    font-size: 10px;
    font-weight: bold;
}

.nav-bar {
    position: absolute;
    top: 227px;
    right: 3px;
    background: #575b62;
    border-radius: 5px;
    box-shadow: 0 0 2px #111;
}

.ucs {
    position: absolute;
    bottom: 25px;
    left: 24px;
    overflow: visible;
}

.axis-name {
    fill: #fff;
    font-size: 18px;
    font-weight: 300;
    text-anchor: middle;
}

.command {
    position: absolute;
    right: 255px;
    bottom: 1px;
    left: 259px;
    display: flex;
    height: 25px;
}

.command-tools {
    display: flex;
    align-items: center;
    justify-content: space-between;
    width: 58px;
    padding: 0 6px 0 3px;
    background: #2f3644;
    border-radius: 3px 0 0 3px;
}

.command-line {
    display: flex;
    flex: 1;
    padding: 0 3px 0 4px;
    background: #fff;
}

.command-line input {
    flex: 1;
    border: none;
    outline: none;
    font: inherit;
}

/* Status bar */
.statusbar {
    display: flex;
    justify-content: space-between;
    height: 33px;
}

.layout-tabs {
    display: flex;
    height: 25px;
}

.layout-tabs .menu-btn {
    width: 42px;
    padding-left: 6px;
}

.layout-tab {
    width: 66px;
}

.layout-tab.active {
    width: 62px;
    background: #3b4453;
    clip-path: polygon(10px 0, 100% 0, 52px 100%, 0 100%);
    color: #fff;
}

.status-tools {
    display: flex;
    gap: 3px;
    height: 24px;
    margin: 2px 3px 0 0;
    padding-left: 2px;
    outline: 5px solid #f00;
}

.group {
    display: flex;
    gap: 1px;
    background: #3b4453;
}

.group.wide {
    padding: 0 2px;
}

.status-tools button {
    min-width: 23px;
}

.status-tools .model {
    width: 33px;
    background: #3b4453;
    color: #fff;
}

.status-tools .more {
    width: 16px;
    min-width: 16px;
}

.status-tools .on {
    background: #5f8ebf;
}

.status-tools .scale {
    width: 33px;
    gap: 4px;
}
```
